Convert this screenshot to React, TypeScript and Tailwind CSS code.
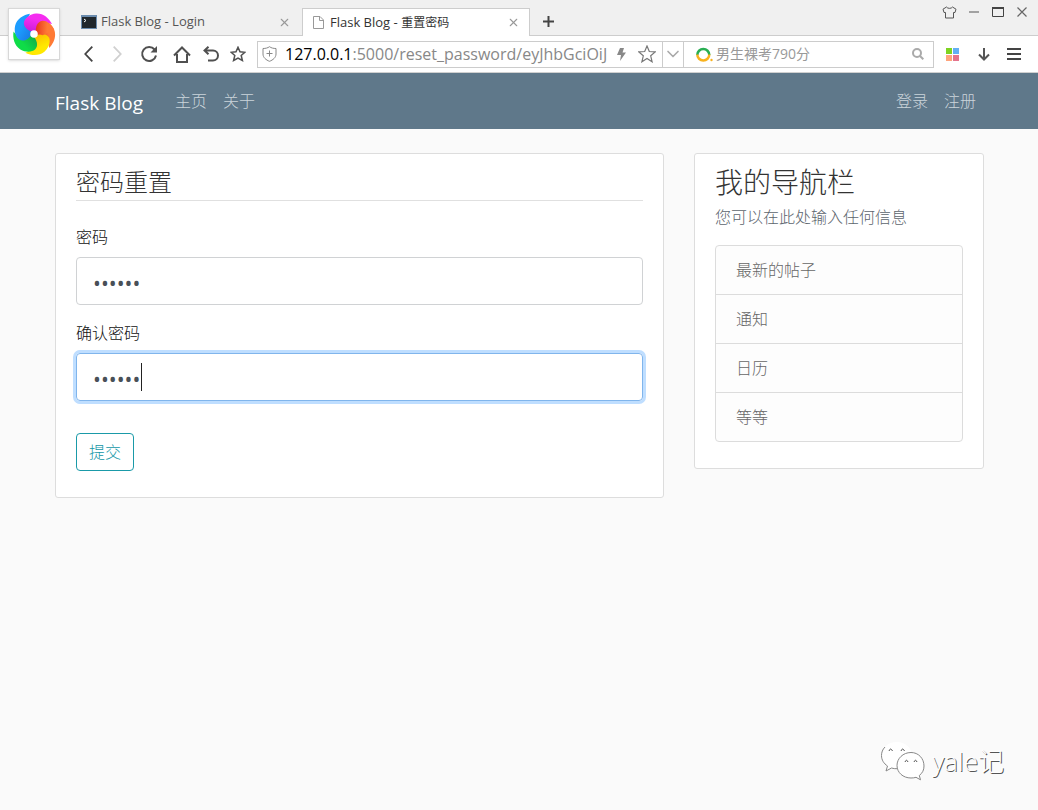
import { useState, type ReactNode } from 'react';
import { ChevronDown, X } from 'lucide-react';

const petals = [
    { angle: 72, from: '#ff7a35', to: '#e52a1c' },
    { angle: 144, from: '#ffe800', to: '#f9b800' },
    { angle: 216, from: '#0fdc48', to: '#14a848' },
    { angle: 288, from: '#1c9cff', to: '#1a78e0' },
    { angle: 0, from: '#f52df0', to: '#c31ad6' },
];

const sidebarItems = ['最新的帖子', '通知', '日历', '等等'];

function BrowserLogo() {
    return (
        <svg width="44" height="44" viewBox="-22 -22 44 44" aria-hidden="true">
            <defs>
                {petals.map((p, i) => (
                    <linearGradient key={i} id={`petal${i}`} x1="0.6" y1="0" x2="0.3" y2="1">
                        <stop offset="0.3" stopColor={p.from} />
                        <stop offset="1" stopColor={p.to} />
                    </linearGradient>
                ))}
            </defs>
            {petals.map((p, i) => (
                <path
                    key={i}
                    transform={`rotate(${p.angle})`}
                    fill={`url(#petal${i})`}
                    d="M0-2C-6-3-11-7-10-12C-9-16-4-20 2-20.500C9-21 15-16 18-10C13-12 8-8 5 0Z"
                />
            ))}
            {/* the first petal lies over the last one */}
            <path transform="rotate(72)" fill="url(#petal0)" d="M0-2C-6-3-11-7-10-12C-9-16-4-20 2-20.500L4-8Z" />
            <circle r="3.800" fill="#fff" />
        </svg>
    );
}

function IconButton({ label, children, className = '' }: { label: string; children: ReactNode; className?: string }) {
    return (
        <button type="button" aria-label={label} className={`flex h-6 shrink-0 items-center justify-center ${className}`}>
            {children}
        </button>
    );
}

function TabBar() {
    return (
        <div className="flex h-9 items-end border-b border-[#cdcdcd] bg-[#f0f0f0] pl-[72px] text-[13px]">
            <div className="flex h-7 w-[230px] items-center pt-0.5 pl-[9px] pr-[11px] text-[#555]">
                <svg width="16" height="14" viewBox="0 0 16 14" aria-hidden="true">
                    <rect width="16" height="14" fill="#6b8cae" />
                    <rect x="1" y="2" width="14" height="11" fill="#20272c" />
                    <path d="M3 4l2 1.500l-2 1.500" stroke="#fff" fill="none" />
                </svg>
                <span className="ml-1 flex-1">Flask Blog - Login</span>
                <button type="button" aria-label="关闭标签"><X size={13} color="#999" /></button>
            </div>
            <div className="-mb-px flex h-7 w-[228px] items-center border border-b-0 border-[#cdcdcd] bg-white pl-[10px] pr-[9px] text-[#333]">
                <svg width="11" height="13" viewBox="0 0 11 13" fill="none" stroke="#999" aria-hidden="true">
                    <path d="M.5.5h6.500l3.500 3.500v8.500h-10zM6.500.500v4h4" />
                </svg>
                <span className="ml-1.5 flex-1">Flask Blog - <span className="text-xs">重置密码</span></span>
                <button type="button" aria-label="关闭标签"><X size={13} color="#999" /></button>
            </div>
            <IconButton label="新标签" className="mb-0.5 ml-2 w-5">
                <svg width="11" height="11" viewBox="0 0 11 11" stroke="#444" strokeWidth="2"><path d="M5.500 0v11M0 5.500h11" /></svg>
            </IconButton>
            <div className="ml-auto flex items-center gap-[10px] self-start pr-[9px]">
                <IconButton label="皮肤">
                    <svg width="15" height="13" viewBox="0 0 15 13" fill="none" stroke="#555" strokeLinejoin="round">
                        <path d="M4.500 1L1 3.200l1 3.300h1.500v5.500h8V6.500H13l1-3.300L10.500 1C9.500 2.800 5.500 2.800 4.500 1z" />
                    </svg>
                </IconButton>
                <IconButton label="最小化" className="w-[14px]">
                    <svg width="10" height="2" viewBox="0 0 10 2"><path d="M0 1h10" stroke="#555" /></svg>
                </IconButton>
                <IconButton label="最大化" className="w-[14px]">
                    <svg width="12" height="10" viewBox="0 0 12 10"><path d="M.5 1v8.500h11V1" fill="none" stroke="#444" /><path d="M0 1h12" stroke="#444" strokeWidth="2" /></svg>
                </IconButton>
                <IconButton label="关闭" className="w-[14px]">
                    <svg width="10" height="10" viewBox="0 0 10 10"><path d="M.5.5l9 9M9.500.500l-9 9" stroke="#666" strokeWidth="1.200" /></svg>
                </IconButton>
            </div>
        </div>
    );
}

function Toolbar() {
    return (
        <div className="flex h-[37px] items-center border-b border-[#d0d0d0] bg-white pl-[74px] pr-4">
            <IconButton label="后退" className="w-7">
                <svg width="9" height="16" viewBox="0 0 9 16" fill="none" stroke="#444" strokeWidth="1.800"><path d="M8.300.7L1.300 8l7 7.300" /></svg>
            </IconButton>
            <IconButton label="前进" className="w-[31px]">
                <svg width="9" height="16" viewBox="0 0 9 16" fill="none" stroke="#d0d0d0" strokeWidth="1.800"><path d="M.7.7l7 7.300l-7 7.300" /></svg>
            </IconButton>
            <IconButton label="刷新" className="w-8">
                <svg width="18" height="18" viewBox="0 0 18 18" fill="none" stroke="#505050" strokeWidth="2">
                    <path d="M14.600 4.500A7 7 0 1 0 16 10.500" />
                    <path d="M17 1v6.500h-6.500z" fill="#505050" stroke="none" />
                </svg>
            </IconButton>
            <IconButton label="主页" className="w-[34px]">
                <svg width="18" height="17" viewBox="0 0 18 17" fill="none" stroke="#505050" strokeWidth="2">
                    <path d="M1 9.500L9 1.500l8 8M4 8v8h10V8" />
                </svg>
            </IconButton>
            <IconButton label="恢复" className="w-6">
                <svg width="16" height="16" viewBox="0 0 16 16" fill="none" stroke="#505050" strokeWidth="2">
                    <path d="M1.500 4.500h8.500a4.800 4.800 0 0 1 0 10H5M5.500.7l-4 3.800l4 3.800" />
                </svg>
            </IconButton>
            <IconButton label="收藏夹" className="mr-1 w-[30px]">
                <svg width="16" height="16" viewBox="0 0 16 16" fill="none" stroke="#505050" strokeWidth="1.500">
                    <path d="M8 1.300l2 4.500l4.900.5l-3.700 3.200l1.200 5L8 12l-4.400 2.500l1.200-5L1.100 6.300L6 5.800z" />
                </svg>
            </IconButton>

            <div className="flex h-[27px] min-w-0 flex-1 items-center border border-[#ccc]">
                <svg className="ml-1 shrink-0" width="15" height="16" viewBox="0 0 15 16" fill="none" stroke="#888" aria-hidden="true">
                    <path d="M7.500.7C5.800 2 3.500 2.500 1 2.500V8c0 3.500 3 6 6.500 7.300C11 14 14 11.500 14 8V2.500C11.500 2.500 9.200 2 7.500.7zM7.500 4.500v6M4.500 7.500h6" />
                </svg>
                <div className="ml-2 min-w-0 flex-1 overflow-hidden whitespace-nowrap text-base leading-6 text-[#888]">
                    <span className="text-black">127.0.0.1</span>:5000/reset_password/eyJhbGciOiJ
                </div>
                <svg className="ml-2.5 shrink-0" width="9" height="13" viewBox="0 0 9 13" fill="#888" aria-hidden="true"><path d="M3 0h4L5.500 4.500H9L3 13l1-6H0z" /></svg>
                <IconButton label="收藏" className="ml-3 mr-1.5 w-[18px]">
                    <svg width="18" height="18" viewBox="0 0 18 18" fill="none" stroke="#777" strokeWidth="1.200">
                        <path d="M9 1l2.300 5.500l5.900.4l-4.500 3.900l1.400 6L9 13.500l-5.100 3.300l1.400-6L.8 6.900l5.900-.4z" />
                    </svg>
                </IconButton>
                <IconButton label="历史地址" className="h-[25px] w-[21px] border-l border-[#ccc]"><ChevronDown size={20} color="#aaa" strokeWidth={2} /></IconButton>
            </div>
            <form className="flex h-[27px] w-[250px] items-center border border-l-0 border-[#ccc]" onSubmit={(e) => e.preventDefault()}>
                <svg className="ml-3 shrink-0" width="17" height="15" viewBox="0 0 17 15" fill="none" strokeWidth="2.500" aria-hidden="true">
                    <path d="M1.300 8a6 6 0 1 1 12 0" stroke="#29ae53" />
                    <path d="M1.300 7.500a6 6 0 0 0 12 0" stroke="#f9b21d" />
                    <circle cx="15.500" cy="13" r="1.200" fill="#f9b21d" />
                </svg>
                <input aria-label="搜索" placeholder="男生裸考790分" className="ml-[3px] min-w-0 flex-1 text-sm outline-none placeholder:text-[#999]" />
                <IconButton label="搜索按钮" className="mr-2 w-[14px]">
                    <svg width="12" height="12" viewBox="0 0 12 12" fill="none" stroke="#aaa" strokeWidth="2"><circle cx="5" cy="5" r="4" /><path d="M8 8l3.300 3.300" /></svg>
                </IconButton>
            </form>
            <IconButton label="扩展" className="ml-3 w-[13px]">
                <svg width="13" height="13" viewBox="0 0 13 13">
                    <path fill="#7ed321" d="M0 0h6v6H0z" />
                    <path fill="#62b0f5" d="M7 0h6v6H7z" />
                    <path fill="#ffa47c" d="M0 7h6v6H0z" />
                    <path fill="#e5738d" d="M7 7h6v6H7z" />
                </svg>
            </IconButton>
            <IconButton label="下载" className="ml-[19px] w-3">
                <svg width="12" height="13" viewBox="0 0 12 13" fill="none" stroke="#555" strokeWidth="2"><path d="M6 0v11.500M1 6.500l5 5l5-5" /></svg>
            </IconButton>
            <IconButton label="菜单" className="ml-4 w-4">
                <svg width="14" height="12" viewBox="0 0 14 12" stroke="#444" strokeWidth="2"><path d="M0 1h14M0 6h14M0 11h14" /></svg>
            </IconButton>
        </div>
    );
}

function NavLink({ children }: { children: ReactNode }) {
    return <a href="#" className="px-2 font-light text-[#cbd5db] hover:text-white">{children}</a>;
}

function ResetForm() {
    const [password, setPassword] = useState('secret');
    const [confirm, setConfirm] = useState('secret');
    return (
        <form className="rounded-[3px] border border-[#ddd] bg-white px-5 py-2.5" onSubmit={(e) => e.preventDefault()}>
            <fieldset className="mb-4">
                <legend className="mb-6 w-full border-b border-[#e0e0e0] text-2xl leading-9 font-light">密码重置</legend>
                <div className="mb-4">
                    <label htmlFor="password" className="mb-2 block font-light text-[#111]">密码</label>
                    <input
                        id="password"
                        type="password"
                        value={password}
                        onChange={(e) => setPassword(e.target.value)}
                        className="block h-12 w-full rounded border border-[#d0d2d4] px-4 pt-1 text-[21px] text-[#495057] outline-none"
                    />
                </div>
                <div className="mb-4">
                    <label htmlFor="confirm" className="mb-2 block font-light text-[#111]">确认密码</label>
                    <div className="relative">
                        <input
                            id="confirm"
                            type="password"
                            value={confirm}
                            onChange={(e) => setConfirm(e.target.value)}
                            className="block h-12 w-full rounded border border-[#80b5ec] px-4 pt-1 text-[21px] text-[#495057] caret-transparent ring-3 ring-[#bfdeff] outline-none"
                        />
                        {/* text cursor */}
                        <span className="absolute top-2.5 left-[65px] h-7 w-px bg-[#222]" />
                    </div>
                </div>
            </fieldset>
            <button type="submit" className="mb-4 block h-[38px] rounded border border-[#1a9aa8] px-3 font-light text-[#1296a6]">提交</button>
        </form>
    );
}

function Sidebar() {
    return (
        <aside className="rounded-[3px] border border-[#ddd] bg-white px-5 py-2.5">
            <h3 className="mb-1.5 pt-0.5 text-[28px] leading-[33px] font-light">我的导航栏</h3>
            <p className="mb-4 font-light text-[#5c656d]">您可以在此处输入任何信息</p>
            <ul className="mb-4 divide-y divide-[#dcdcdc] rounded border border-[#dcdcdc] bg-[#fdfdfd] font-light text-[#666]">
                {sidebarItems.map((item) => (
                    <li key={item} className="px-5 py-3">{item}</li>
                ))}
            </ul>
        </aside>
    );
}

function Watermark() {
    return (
        <div className="absolute right-[34px] bottom-7 flex items-center gap-1.5">
            <svg width="46" height="42" viewBox="0 0 46 42" fill="#fff" stroke="#888" aria-hidden="true">
                <path d="M17 2C8 2 1.500 8 1.500 15.500c0 4.500 2.300 8 6 10.500l-1.500 5l5.500-3c2 .6 4 .8 6 .7C26 28 32 22 32 15.500S26 2 17 2z" stroke="none" />
                <path d="M5 7C2.500 9.500 1.500 12.500 1.500 15.500c0 4.500 2.300 8 6 10.500l-1.500 5l5.500-3c2 .6 3.500 .8 5.500 .7" fill="none" />
                <path d="M31 12.500C23 12.500 17 18.500 17 25.500s6 12.500 14 12.500c2 0 3.500-.2 5-.7l4.500 2.500l-1.200-4.300C42.500 33 44 30 44 26c0-7.500-5.500-13.500-13-13.500z" />
                <path d="M9 11q1.500-4 3.500 0M21 11q1.500-4 3.500 0M25 22q1.500-3.500 3 0M34 22q1.500-3.500 3 0" fill="none" stroke="#555" />
            </svg>
            <span className="text-[26px] leading-9 font-light text-white [text-shadow:1px_1px_0_#555]">yale记</span>
        </div>
    );
}

export default function App() {
    return (
        <div className="relative flex min-h-screen flex-col bg-[#fafafa] font-['Open_Sans','Noto_Sans_CJK_SC',sans-serif] text-base text-[#333]">
            <header>
                <TabBar />
                <Toolbar />
                <div className="absolute top-2 left-2 flex size-[52px] items-center justify-center border border-[#d8d8d8] bg-white shadow">
                    <BrowserLogo />
                </div>
            </header>

            <nav className="bg-[#5f788a]">
                <div className="mx-auto flex h-14 max-w-[960px] items-center pr-[15px] pl-4">
                    <a href="#" className="mr-6 pt-1 text-[19px] leading-7 text-white">Flask Blog</a>
                    <NavLink>主页</NavLink>
                    <NavLink>关于</NavLink>
                    <div className="ml-auto flex">
                        <NavLink>登录</NavLink>
                        <NavLink>注册</NavLink>
                    </div>
                </div>
            </nav>

            <main className="mx-auto grid w-full max-w-[960px] grid-cols-[2fr_1fr] items-start pt-6">
                <div className="pr-[15px] pl-4"><ResetForm /></div>
                <div className="px-[15px]"><Sidebar /></div>
            </main>

            <Watermark />
        </div>
    );
}
